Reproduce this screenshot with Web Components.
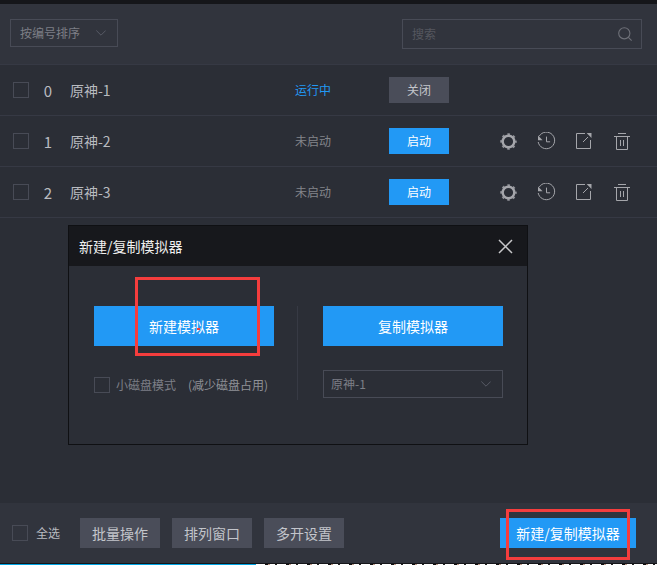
<!DOCTYPE html>
<html><head><meta charset="utf-8"><style>
html,body{margin:0;padding:0;background:#2b2e36;}
body{width:657px;height:565px;overflow:hidden;font-family:"Liberation Sans","Noto Sans CJK SC",sans-serif;}
</style></head><body>
<emu-app></emu-app>
<script>
const FONT='"Noto Sans CJK SC","Liberation Sans",sans-serif';
const chev='<svg width="10" height="6" viewBox="0 0 10 6" fill="none" stroke="#585b66" stroke-width="1"><path d="M.3.5 5 5.2 9.7.5"/></svg>';
class EmuCheck extends HTMLElement{constructor(){super();this.attachShadow({mode:'open'}).innerHTML=`<style>:host{display:block;width:14px;height:14px;border:1px solid #484b56;flex:none}</style>`}}
class EmuBtn extends HTMLElement{constructor(){super();this.attachShadow({mode:'open'}).innerHTML=`<style>
:host{display:flex;align-items:center;justify-content:center;height:var(--h,26px);width:var(--w,60px);background:#4a4d59;color:#c3c5cb;font:var(--fs,12px)/1 ${FONT};flex:none}
:host([primary]){background:#2299f5;color:#fff}
</style><slot></slot>`}}
class EmuSelect extends HTMLElement{constructor(){super();this.attachShadow({mode:'open'}).innerHTML=`<style>
:host{display:flex;align-items:center;justify-content:space-between;box-sizing:border-box;border:1px solid #484b56;font:12px/1 ${FONT};color:#7d7f86;width:var(--w);height:var(--h);padding:0 var(--pr) 0 var(--pl);flex:none}
svg{display:block}
</style><slot></slot>${chev}`}}
class EmuSearch extends HTMLElement{constructor(){super();this.attachShadow({mode:'open'}).innerHTML=`<style>
:host{display:flex;align-items:center;justify-content:space-between;box-sizing:border-box;width:240px;height:30px;border:1px solid #484b56;padding:0 9px;font:12px/1 ${FONT};color:#55575f;flex:none}
</style><slot></slot><svg width="14" height="14" viewBox="0 0 14 14" fill="none" stroke="#6e7078" stroke-width="1.1"><circle cx="6.3" cy="6.3" r="5.6"/><path d="M10.4 10.4 13.6 13.6"/></svg>`}}
const icons={
gear:`<svg width="17" height="17" viewBox="0 0 17 17" fill="none" stroke="#a5a6ab"><circle cx="8.5" cy="8.5" r="5.8" stroke-width="2.4"/><circle cx="8.5" cy="8.5" r="7.4" stroke-width="1.7" stroke-dasharray="2.6 3.21" stroke-dashoffset="1.3" opacity=".85"/></svg>`,
hist:`<svg width="19" height="18" viewBox="0 0 19 18" fill="none" stroke="#a5a6ab" stroke-width="1"><path d="M2.2 4.2A8.3 8.3 0 1 1 1.2 10"/><path d="M1 3.6v4.6h4.6z" fill="#a5a6ab" stroke="none"/><path d="M9.5 4.6v5.2h3.6"/></svg>`,
share:`<svg width="16" height="16" viewBox="0 0 16 16" fill="none" stroke="#a5a6ab" stroke-width="1"><path d="M9 .5H.5v15h14V7"/><path d="M7 9l5-5"/><path d="M10.6 0H15.5v4.9z" fill="#a5a6ab" stroke="none"/></svg>`,
trash:`<svg width="16" height="17" viewBox="0 0 16 17" fill="none" stroke="#a5a6ab" stroke-width="1"><path d="M0 3.5h16M4 .5h8M2.5 3.5v13h11v-13M6.5 7v6M9.5 7v6"/></svg>`};
class EmuRow extends HTMLElement{
connectedCallback(){const run=this.hasAttribute('running');
this.attachShadow({mode:'open'}).innerHTML=`<style>
:host{display:flex;align-items:center;height:50px;border-bottom:1px solid #363944;font:14px/1 ${FONT};color:#b9bbc0;padding-left:13px;flex:none}
.n{width:14px;text-align:center;margin-left:12px;font-size:15px;flex:none}
.name{width:225px;margin-left:15px;flex:none}
.st{width:94px;font-size:12px;color:${run?'#2299f5':'#83858b'};flex:none}
.ics{display:flex;align-items:center;margin-left:40px}
.ics>span{display:flex;justify-content:center;width:38px;}
</style><emu-check></emu-check><span class="n">${this.getAttribute('n')}</span><span class="name">${this.getAttribute('name')}</span><span class="st">${run?'运行中':'未启动'}</span>
${run?'<emu-btn>关闭</emu-btn>':`<emu-btn primary>启动</emu-btn><div class="ics"><span>${icons.gear}</span><span>${icons.hist}</span><span>${icons.share}</span><span>${icons.trash}</span></div>`}`}}
class EmuDialog extends HTMLElement{constructor(){super();this.attachShadow({mode:'open'}).innerHTML=`<style>
:host{position:absolute;left:68px;top:225px;width:460px;height:220px;box-sizing:border-box;border:1px solid #0f1013;background:#2b2e36;display:flex;flex-direction:column}
.hd{height:40px;background:#17181c;display:flex;align-items:center;justify-content:space-between;padding:0 14px 0 10px;font:14px/1 ${FONT};color:#f0f0f0;flex:none}
.bd{display:flex;padding-top:40px}
.col{width:180px;display:flex;flex-direction:column;flex:none}
.l{margin-left:25px}.r{margin-left:25px}
.sep{width:1px;height:94px;background:#373a44;margin-left:23px;flex:none}
.opt{display:flex;align-items:center;margin-top:31px;font:12px/1 ${FONT};color:#7d7f86;height:16px;white-space:nowrap}
.opt b{font-weight:400;margin-left:6px}
.opt i{font-style:normal;color:#8f9197;margin-left:12px}
emu-btn{--w:180px;--h:40px;--fs:14px}
emu-select{--w:180px;--h:28px;--pl:7px;--pr:11px;margin-top:24px}
.dot{position:absolute;left:128px;top:102px;width:3px;height:2px;background:#f53d3d}
</style><div class="hd"><span>新建/复制模拟器</span><svg width="15" height="15" viewBox="0 0 15 15" fill="none" stroke="#c8c8ca" stroke-width="1.5"><path d="M1 1l13 13M14 1 1 14"/></svg></div>
<div class="bd"><div class="col l"><emu-btn primary>新建模拟器</emu-btn><div class="opt"><emu-check></emu-check><b>小磁盘模式</b><i>(减少磁盘占用)</i></div></div><div class="sep"></div><div class="col r"><emu-btn primary>复制模拟器</emu-btn><emu-select>原神-1</emu-select></div></div>
<span class="dot"></span><emu-mark style="--x:66px;--y:51px;--mw:125px;--mh:79px"></emu-mark>`}}
class EmuMark extends HTMLElement{constructor(){super();this.attachShadow({mode:'open'}).innerHTML=`<style>
:host{position:absolute;left:var(--x);top:var(--y);width:var(--mw);height:var(--mh);box-sizing:border-box;border:3px solid #f53d3d;pointer-events:none}
</style>`}}
class EmuApp extends HTMLElement{constructor(){super();this.attachShadow({mode:'open'}).innerHTML=`<style>
:host{display:flex;flex-direction:column;width:657px;height:565px;position:relative;background:#2b2e36;overflow:hidden}
.top{height:4px;background:#15161a;flex:none}
.tool{height:45px;background:#31343d;border-bottom:1px solid #363944;display:flex;align-items:flex-start;justify-content:space-between;padding:15px 15px 0 10px;box-sizing:content-box;flex:none}
.list{flex:1;display:flex;flex-direction:column;min-height:0}
.foot{height:60px;background:#31343d;display:flex;align-items:center;padding:0 21px 0 12px;flex:none;box-sizing:border-box;font:12px/1 ${FONT};color:#b9bbc0}
.all{margin:0 20px 0 8px;white-space:nowrap}
emu-btn{--w:80px;--h:30px;--fs:14px;margin-right:12px}
.grow{flex:1}
emu-btn[primary]{margin-right:0;--w:136px}
.tool emu-select{--w:108px;--h:28px;--pl:9px;--pr:11px}
.line{height:1px;background:#15161a;flex:none}
.strip{height:1px;flex:none;display:flex}
.strip i{display:block;width:256px;background:#00a4e4}
.strip b{display:block;flex:1;background:repeating-linear-gradient(90deg,#fff 0 9px,#111 9px 12px,#b98 12px 14px,#fff 14px 19px,#222 19px 21px)}
</style><div class="top"></div>
<div class="tool"><emu-select>按编号排序</emu-select><emu-search>搜索</emu-search></div>
<div class="list"><emu-row n="0" name="原神-1" running></emu-row><emu-row n="1" name="原神-2"></emu-row><emu-row n="2" name="原神-3"></emu-row></div>
<div class="foot"><emu-check></emu-check><span class="all">全选</span><emu-btn>批量操作</emu-btn><emu-btn>排列窗口</emu-btn><emu-btn>多开设置</emu-btn><span class="grow"></span><emu-btn primary>新建/复制模拟器</emu-btn></div>
<div class="line"></div><div class="strip"><i></i><b></b></div>
<emu-dialog></emu-dialog>
<emu-mark style="--x:506px;--y:509px;--mw:124px;--mh:51px"></emu-mark>`}}
customElements.define('emu-check',EmuCheck);customElements.define('emu-btn',EmuBtn);customElements.define('emu-select',EmuSelect);customElements.define('emu-search',EmuSearch);customElements.define('emu-row',EmuRow);customElements.define('emu-mark',EmuMark);customElements.define('emu-dialog',EmuDialog);customElements.define('emu-app',EmuApp);
</script></body></html>
